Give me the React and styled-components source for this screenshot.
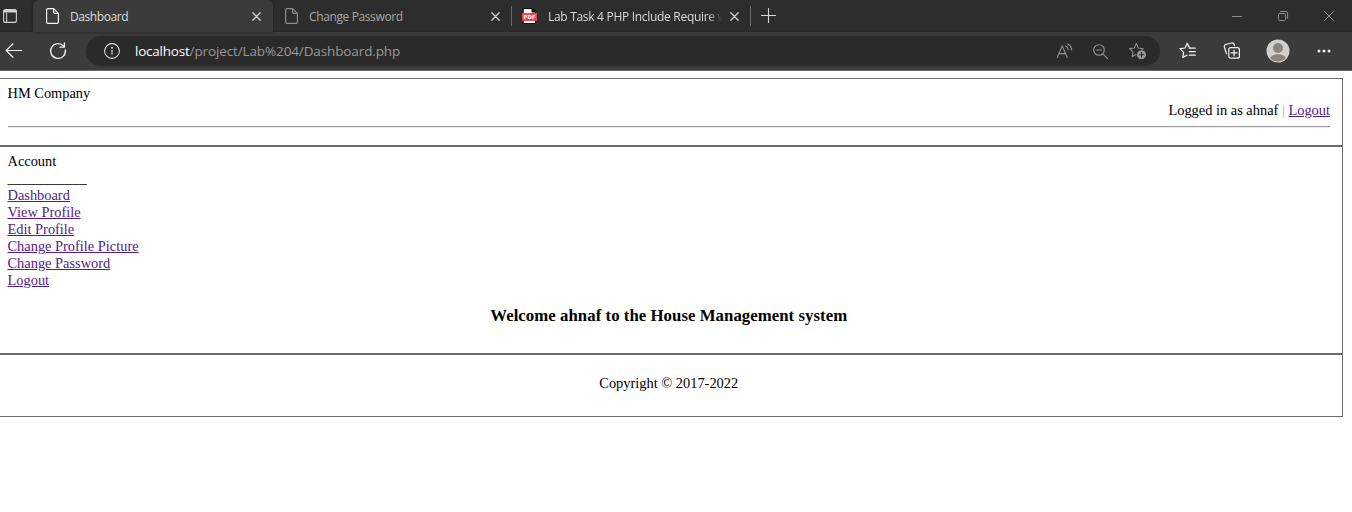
import React from "react";
import styled, { createGlobalStyle } from "styled-components";

const GlobalStyle = createGlobalStyle`
  * { box-sizing: border-box; }
  body { margin: 0; background: #fff; overflow: hidden; }
`;

const Browser = styled.div`
  width: 1352px;
  height: 512px;
  overflow: hidden;
  background: #fff;
`;

const TabStrip = styled.div`
  display: flex;
  height: 32px;
  background: #2d2d2d;
  box-shadow: inset 0 -1px 0 #292929;
  font-family: "Open Sans", "Noto Sans", sans-serif;
  font-size: 12px;
`;

const TabMenu = styled.div`
  width: 33px;
  padding: 9px 0 0 3px;
`;

const Tab = styled.div`
  display: flex;
  align-items: center;
  width: ${(p) => p.$width}px;
  height: 32px;
  padding-left: ${(p) => p.$inset}px;
  color: ${(p) => (p.$active ? "#dedede" : p.$dim ? "#a8a8a8" : "#d8d8d8")};
  background: ${(p) => (p.$active ? "#3b3b3b" : "transparent")};
  border-radius: 6px 6px 0 0;
  box-shadow: ${(p) => (p.$active ? "0 0 3px #1c1c1c" : "none")};
`;

const TabTitle = styled.span`
  width: ${(p) => p.$width}px;
  margin: 0 ${(p) => p.$after || 0}px 0 11px;
  padding-top: 1px;
  overflow: hidden;
  white-space: nowrap;
  line-height: 18px;
  letter-spacing: ${(p) => p.$spacing || 0}px;
  ${(p) => p.$fade && "mask-image: linear-gradient(90deg, #000 160px, transparent 174px);"}
`;

const Divider = styled.i`
  width: 1px;
  height: 20px;
  margin-top: 6px;
  background: #6c6c6c;
`;

const NewTab = styled.div`
  padding: 8px 0 0 10px;
`;

const WindowButtons = styled.div`
  display: flex;
  gap: 34px;
  margin-left: auto;
  padding: 10px 17px 0 0;
`;

const Toolbar = styled.div`
  display: flex;
  align-items: center;
  height: 39px;
  padding: 0 20px 0 5px;
  background: #3b3b3b;
  border-bottom: 1px solid #6a6868;
`;

const NavButtons = styled.div`
  display: flex;
  gap: 26px;
  width: 81px;
`;

const AddressBar = styled.div`
  display: flex;
  align-items: center;
  width: 1074px;
  height: 30px;
  padding: 0 13px 0 17px;
  border-radius: 15px;
  background: #2a2a2a;
`;

const Url = styled.span`
  margin-left: 14px;
  color: #989898;
  font: 13.5px/20px "Open Sans", "Noto Sans", sans-serif;
  letter-spacing: -0.12px;
  b { font-weight: 400; color: #fff; letter-spacing: -0.22px; }
`;

const AddressActions = styled.div`
  display: flex;
  align-items: center;
  gap: 19px;
  margin-left: auto;
`;

const BrowserActions = styled.div`
  display: flex;
  flex: 1;
  align-items: center;
  justify-content: space-between;
  padding-left: 19px;
`;

const Page = styled.main`
  width: 1343px;
  padding-top: 7px;
  color: #000;
  font: 14.4px/17px "Liberation Serif", "Times New Roman", serif;
`;

const Section = styled.section`
  height: ${(p) => p.$height}px;
  padding: 6px 12px 0 7.5px;
  border: solid #6b6b6b;
  border-width: 1px 1px 1px 0;
`;

const Line = styled.div`
  height: 17px;
  white-space: nowrap;
  text-align: ${(p) => p.$align || "left"};
`;

const Link = styled.a`
  color: #551a8b;
  text-decoration: underline;
`;

const Rule = styled.hr`
  height: 2px;
  margin: 7px 0 0 0.5px;
  border: 0;
  border-top: 1px solid #9a9a9a;
  background: #ededed;
`;

const Bar = styled.span`
  color: #9fb0b0;
`;

const Welcome = styled.h3`
  margin: 17px 0 0;
  font-size: 16.8px;
  line-height: 19px;
  text-align: center;
  letter-spacing: 0.04px;
`;

const Copyright = styled.p`
  margin: 14px 0 0;
  text-align: center;
`;

const Svg = styled.svg`
  flex: none;
  fill: none;
  stroke-linecap: round;
  stroke-linejoin: round;
`;

const Icon = ({ w = 16, h = w, color = "#fff", sw = 1.1, children }) => (
  <Svg width={w} height={h} viewBox={`0 0 ${w} ${h}`} stroke={color} strokeWidth={sw}>
    {children}
  </Svg>
);

const FileIcon = ({ color }) => (
  <Icon w={13} h={16} color={color} sw={1.2}>
    <path d="M2 .6h5.7l4.7 4.7V14a1.4 1.4 0 0 1-1.4 1.4H2A1.4 1.4 0 0 1 .6 14V2A1.4 1.4 0 0 1 2 .6Z M7.6.8v3.4a1.2 1.2 0 0 0 1.2 1.2h3.4" />
  </Icon>
);

const CloseIcon = () => (
  <Icon w={9} color="#d0d0d0" sw={1.3}><path d="m.8.8 7.4 7.4M8.2.8.8 8.2" /></Icon>
);

const PdfText = styled.text`
  font: 700 5.5px "DejaVu Sans", sans-serif;
  fill: #fff;
  stroke: none;
`;

const PdfIcon = () => (
  <Icon w={15} h={16} color="#080808" sw={1}>
    <path d="M1.5.5h9l3 3v12h-12Z" fill="#fff" />
    <path d="M10 .5V4h3.5" fill="#080808" />
    <path d="M0 5h15v8H0Z" fill="#f94244" stroke="none" />
    <PdfText x="1.6" y="11" textLength="12" lengthAdjust="spacingAndGlyphs">PDF</PdfText>
  </Icon>
);

const starPath = "M7.5 1 9.5 5.4 14.3 6 10.8 9.3 11.6 14 7.5 11.7 3.4 14 4.2 9.3.7 6l4.8-.6Z";

const menu = ["Dashboard", "View Profile", "Edit Profile", "Change Profile Picture", "Change Password", "Logout"];

export default function App() {
  return (
    <Browser>
      <GlobalStyle />
      <TabStrip>
        <TabMenu>
          <Icon w={14} color="#d0d0d0" sw={1.1}>
            <rect x=".6" y=".6" width="12.8" height="12.8" rx="2" />
            <path d="M1 2.3h12" strokeWidth="2.6" />
            <path d="M3.6 4v9.2" />
          </Icon>
        </TabMenu>
        <Tab $active $width={240} $inset={13}>
          <FileIcon color="#f4f4f4" />
          <TabTitle $width={182} $spacing={-0.43}>Dashboard</TabTitle>
          <CloseIcon />
        </Tab>
        <Tab $dim $width={238} $inset={12}>
          <FileIcon color="#8d8d8d" />
          <TabTitle $width={182} $spacing={-0.38}>Change Password</TabTitle>
          <CloseIcon />
        </Tab>
        <Divider />
        <Tab $width={238} $inset={10}>
          <PdfIcon />
          <TabTitle $width={175} $after={7} $spacing={-0.3} $fade>Lab Task 4 PHP Include Require w</TabTitle>
          <CloseIcon />
        </Tab>
        <Divider />
        <NewTab>
          <Icon w={15} color="#d5d5d5"><path d="M7.5.5v14M.5 7.5h14" /></Icon>
        </NewTab>
        <WindowButtons>
          <Icon w={12} color="#8f8f8f" sw={1}><path d="M1.5 6.5h9" /></Icon>
          <Icon w={12} color="#8f8f8f" sw={1}>
            <rect x="1.5" y="3.5" width="7" height="7" rx="1" /><path d="M3.5 1.5H9a1.6 1.6 0 0 1 1.6 1.6v5.4" />
          </Icon>
          <Icon w={12} color="#8f8f8f" sw={1}><path d="m1.2 1.2 9.6 9.6m0-9.6-9.6 9.6" /></Icon>
        </WindowButtons>
      </TabStrip>
      <Toolbar>
        <NavButtons>
          <Icon w={18} color="#f2f2f2" sw={1.2}><path d="M16.5 8.5H1.2M8 1.8 1.2 8.5 8 15.2" /></Icon>
          <Icon w={18} color="#f2f2f2" sw={1.3}><path d="M14.6 4.1A7.4 7.4 0 1 0 16.4 8M15.4.9v4.3H11" /></Icon>
        </NavButtons>
        <AddressBar>
          <Icon w={18} color="#d8d8d8">
            <circle cx="9" cy="9" r="7.4" /><path d="M9 8.3v4" /><circle cx="9" cy="5.8" r=".4" fill="#d8d8d8" />
          </Icon>
          <Url><b>localhost</b>/project/Lab%204/Dashboard.php</Url>
          <AddressActions>
            <Icon w={17} color="#929292">
              <path d="m1.2 14.5 5-11.6 5 11.6M2.9 10.6h6.6M9.6 2.9c1.6.7 2.5 2 2.6 3.8M11.7.9c2.4 1.1 3.8 3.1 4 6" />
            </Icon>
            <Icon w={17} color="#929292"><circle cx="7" cy="7" r="5.3" /><path d="M4.5 7h5m1.5 4 4.6 4.6" /></Icon>
            <Icon w={19} h={18} color="#929292">
              <path transform="translate(.8 .6)" d={starPath} />
              <circle cx="13.5" cy="12.8" r="5.2" fill="#2a2a2a" stroke="none" />
              <circle cx="13.5" cy="12.8" r="4" fill="#9a9a9a" />
              <path d="M13.5 10.6V15m-2.2-2.2h4.4" stroke="#2a2a2a" />
            </Icon>
          </AddressActions>
        </AddressBar>
        <BrowserActions>
          <Icon w={18} color="#f4f4f4" sw={1.2}>
            <path d="M10.7 6.1 8.2 1.4 6 6 1 6.7l3.6 3.6-.8 5.1 4.1-2.2M10.3 6.2h6M10.3 9.7h6M10.3 13.2h6" />
          </Icon>
          <Icon w={18} color="#f4f4f4" sw={1.2}>
            <path d="M3.5 11.8 1.3 5A2.2 2.2 0 0 1 2.6 2.5L8.7 1a2.2 2.2 0 0 1 2.5 1.5l.3 1.1" />
            <rect x="5.8" y="5.6" width="10.6" height="10.6" rx="2" /><path d="M11.1 8v5.8m-2.9-2.9H14" />
          </Icon>
          <Icon w={24}>
            <circle cx="12" cy="12" r="11.5" fill="#d1cfcb" stroke="none" />
            <circle cx="12" cy="9" r="5" fill="#8a8583" stroke="none" />
            <path d="M4.2 19.3c1.2-3 4-4 7.8-4s6.6 1 7.8 4c-4 4.3-11.6 4.3-15.6 0Z" fill="#8a8583" stroke="none" />
          </Icon>
          <Icon w={16}>
            <g fill="#f4f4f4" stroke="none"><circle cx="3" cy="8" r="1.5" /><circle cx="8" cy="8" r="1.5" /><circle cx="13" cy="8" r="1.5" /></g>
          </Icon>
        </BrowserActions>
      </Toolbar>
      <Page>
        <Section $height={68}>
          <Line>HM Company</Line>
          <Line $align="right">Logged in as ahnaf <Bar>|</Bar> <Link>Logout</Link></Line>
          <Rule />
        </Section>
        <Section $height={208}>
          <Line>Account</Line>
          <Line>___________</Line>
          {menu.map((item) => <Line key={item}><Link>{item}</Link></Line>)}
          <Welcome>Welcome ahnaf to the House Management system</Welcome>
        </Section>
        <Section $height={63}>
          <Copyright>Copyright © 2017-2022</Copyright>
        </Section>
      </Page>
    </Browser>
  );
}
